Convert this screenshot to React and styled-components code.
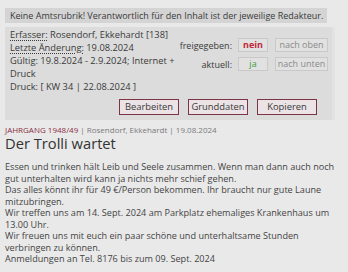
import React from "react";
import styled, { createGlobalStyle } from "styled-components";

const Global = createGlobalStyle`
  html, body {
    margin: 0;
    background: #e9e9e9;
  }
  body {
    font-family: "Open Sans", "DejaVu Sans", sans-serif;
    color: #3a3a3a;
  }
`;

const Page = styled.div`
  padding: 8px 5px 0 5px;
  width: 330px;
`;

const Notice = styled.div`
  width: fit-content;
  background: #d4d4d4;
  font-size: 9px;
  line-height: 15px;
  padding: 0 4px 0 5px;
  color: #3a3a3a;
`;

const InfoBox = styled.div`
  margin-top: 4px;
  background: #dcdcdc;
  border-right: 3px solid #e3e3e3;
  padding: 1px 4px 5px 5px;
  display: grid;
  grid-template-columns: 1fr auto;
`;

const Details = styled.div`
  font-size: 9.3px;
  line-height: 13px;
`;

const Dotted = styled.span`
  text-decoration: underline dotted;
  text-underline-offset: 2px;
`;

const Status = styled.div`
  display: grid;
  grid-template-columns: auto auto auto;
  column-gap: 6px;
  row-gap: 5px;
  align-items: center;
  margin-top: 10px;
  align-self: start;
`;

const Label = styled.span`
  font-size: 9px;
  text-align: right;
  color: #3a3a3a;
`;

const Toggle = styled.span`
  box-sizing: border-box;
  display: block;
  border: 1px solid #c9c9c9;
  background: #e1e1e1;
  height: 14px;
  line-height: 12px;
  text-align: center;
  font-size: 9px;
  width: ${(p) => (p.$wide ? "53px" : "30px")};
  color: ${(p) => p.$color || "#8a8a8a"};
  font-weight: ${(p) => (p.$bold ? 700 : 400)};
  margin-left: ${(p) => (p.$wide ? "1px" : "0")};
`;

const Actions = styled.div`
  grid-column: 1 / -1;
  display: flex;
  justify-content: flex-end;
  gap: 9px;
  margin-top: 6px;
  padding-right: 11px;
`;

const ActionButton = styled.span`
  box-sizing: border-box;
  display: block;
  border: 1.5px solid #7c3446;
  background: #ebe3e5;
  width: 60px;
  height: 16px;
  line-height: 13px;
  text-align: center;
  font-size: 9.4px;
  color: #3a3a3a;
`;

const Meta = styled.div`
  margin-top: 4px;
  font-size: 8px;
  line-height: 11px;
  color: #7a7a7a;
`;

const Volume = styled.span`
  color: #8a2d3e;
`;

const Title = styled.h1`
  margin: 0;
  font-size: 14.7px;
  font-weight: 400;
  line-height: 17px;
  color: #333;
`;

const Body = styled.p`
  margin: 9px 0 0 0;
  font-size: 9.1px;
  line-height: 11.5px;
  color: #444;
`;

export default function App() {
  return (
    <>
      <Global />
      <Page>
        <Notice>Keine Amtsrubrik! Verantwortlich für den Inhalt ist der jeweilige Redakteur.</Notice>
        <InfoBox>
          <Details>
            <Dotted>Erfasser:</Dotted> Rosendorf, Ekkehardt [138]
            <br />
            <Dotted>Letzte Änderung:</Dotted> 19.08.2024
            <br />
            Gültig: 19.8.2024 - 2.9.2024; Internet + Druck
            <br />
            Druck: [ KW 34 | 22.08.2024 ]
          </Details>
          <Status>
            <Label>freigegeben:</Label>
            <Toggle $color="#c0283a" $bold>nein</Toggle>
            <Toggle $wide>nach oben</Toggle>
            <Label>aktuell:</Label>
            <Toggle $color="#3f9a3f">ja</Toggle>
            <Toggle $wide>nach unten</Toggle>
          </Status>
          <Actions>
            <ActionButton>Bearbeiten</ActionButton>
            <ActionButton>Grunddaten</ActionButton>
            <ActionButton>Kopieren</ActionButton>
          </Actions>
        </InfoBox>
        <Meta>
          <Volume>JAHRGANG 1948/49</Volume> | Rosendorf, Ekkehardt | 19.08.2024
        </Meta>
        <Title>Der Trolli wartet</Title>
        <Body>
          Essen und trinken hält Leib und Seele zusammen. Wenn man dann auch noch gut unterhalten wird kann ja nichts mehr schief gehen.
          <br />
          Das alles könnt ihr für 49 €/Person bekommen. Ihr braucht nur gute Laune mitzubringen.
          <br />
          Wir treffen uns am 14. Sept. 2024 am Parkplatz ehemaliges Krankenhaus um 13.00 Uhr.
          <br />
          Wir freuen uns mit euch ein paar schöne und unterhaltsame Stunden verbringen zu können.
          <br />
          Anmeldungen an Tel. 8176 bis zum 09. Sept. 2024
        </Body>
      </Page>
    </>
  );
}
